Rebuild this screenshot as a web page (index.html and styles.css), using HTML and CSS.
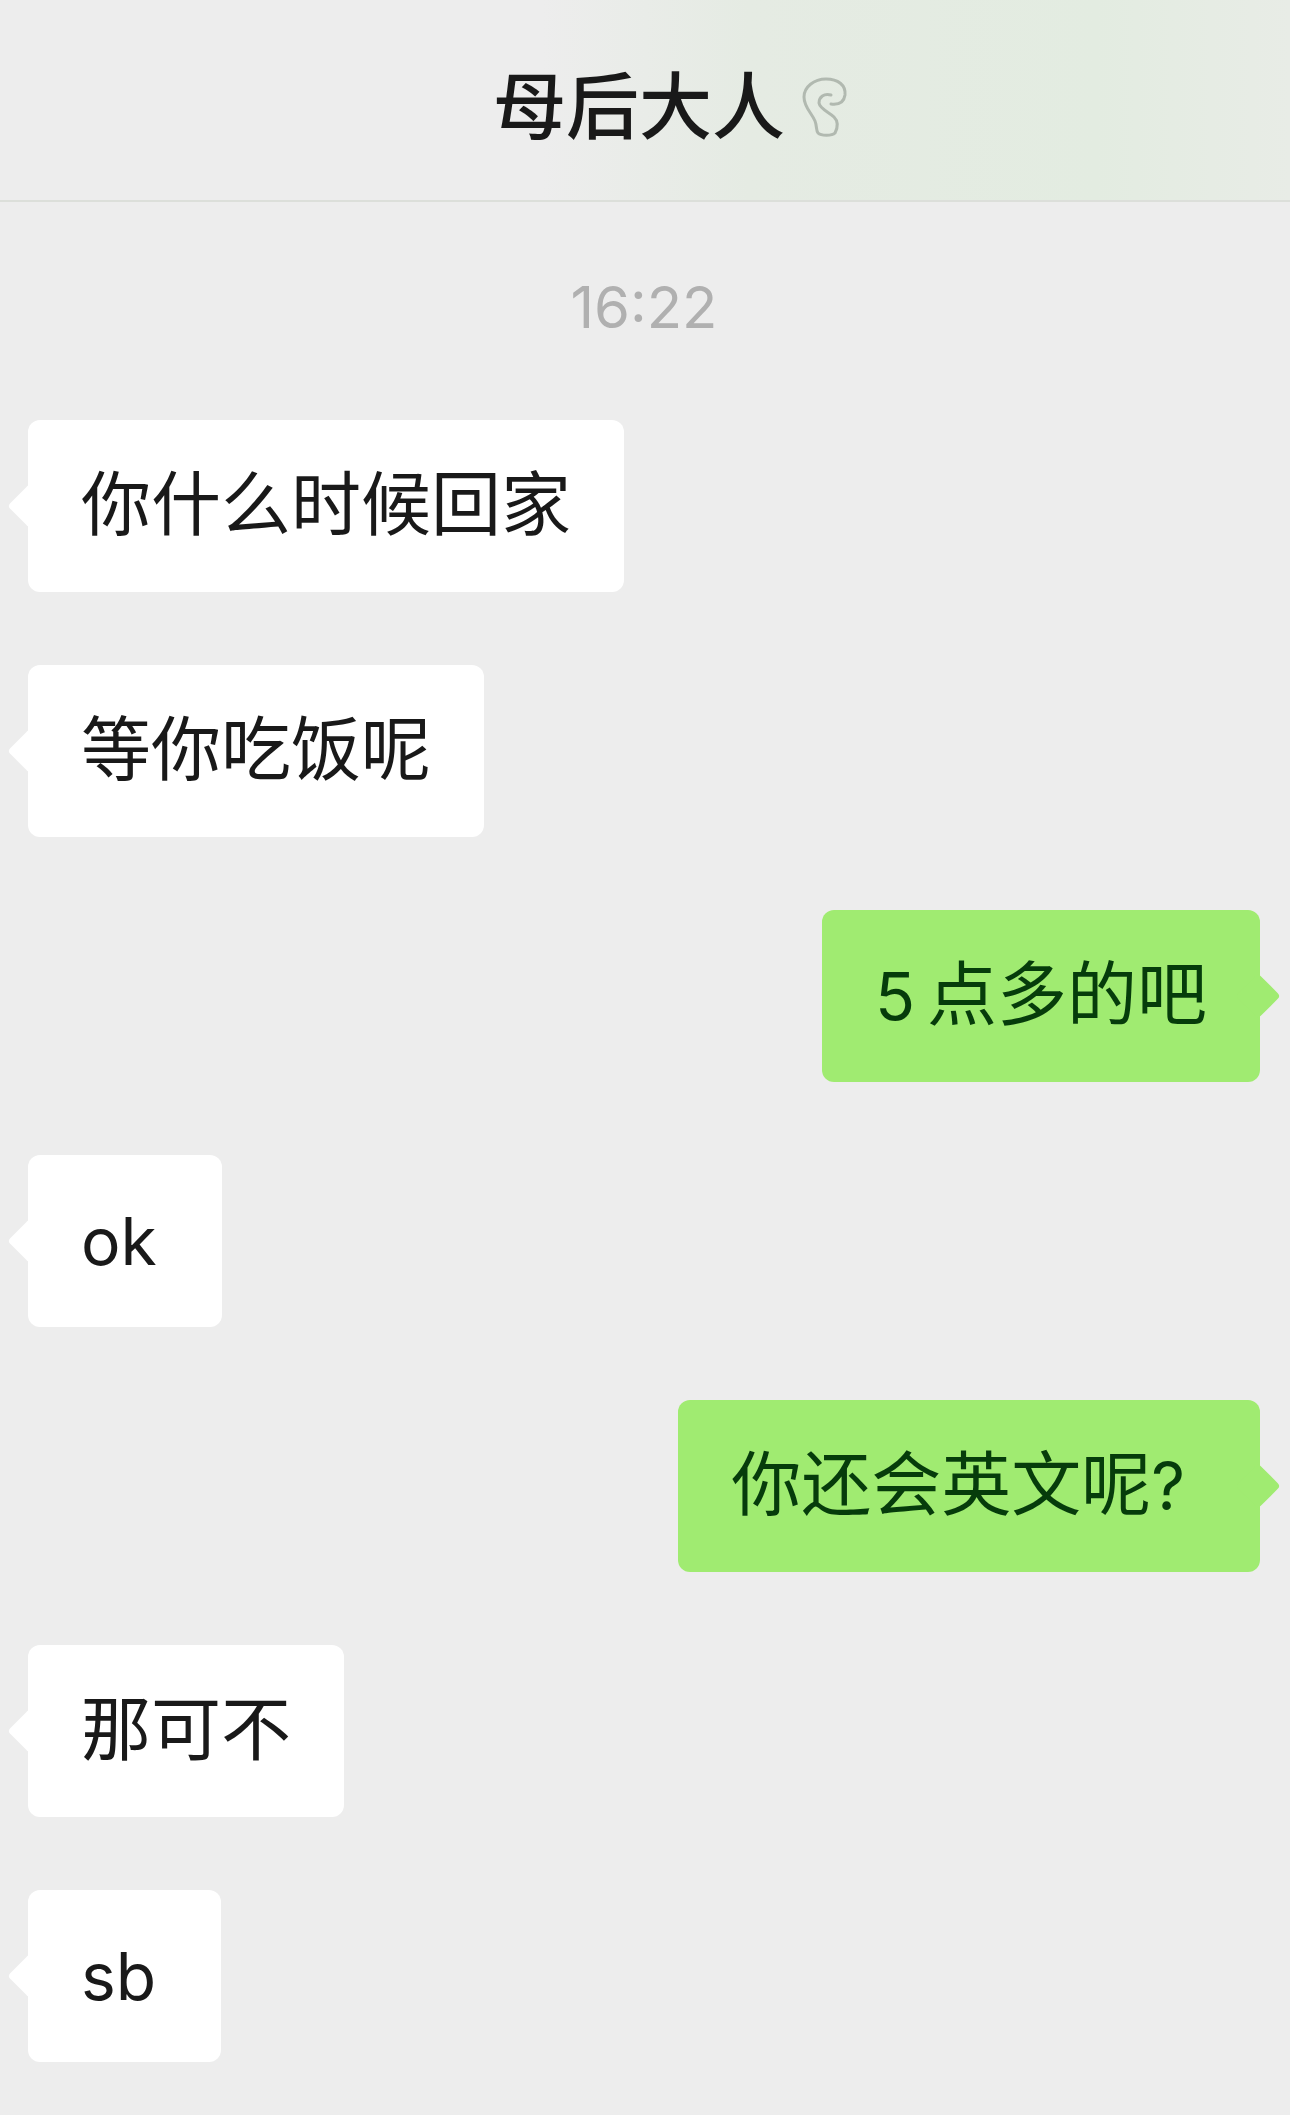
FILE: index.html
```html
<!DOCTYPE html>
<html lang="zh-CN">
<head>
  <meta charset="utf-8">
  <meta name="viewport" content="width=device-width, initial-scale=1">
  <title>母后大人</title>
  <link rel="stylesheet" href="styles.css">
</head>
<body>
  <header class="chat-header">
    <h1 class="chat-title">母后大人</h1>
    <svg class="ear-icon" viewBox="0 0 48 62" aria-hidden="true">
      <path d="M30 28C38 29 43 26 44 19C45 9 37 3 25 3C13 3 3 11 3 21C3 31 10 36 14 45C16 50 15 55 17 57C20 60 31 60 34 57C37 51 37 45 33 41C28 36 19 33 18 27C18 21 23 17 30 19"/>
    </svg>
  </header>
  <main class="chat">
    <time class="chat-time" datetime="16:22">16:22</time>
    <ol class="messages">
      <li class="bubble bubble-in">你什么时候回家</li>
      <li class="bubble bubble-in">等你吃饭呢</li>
      <li class="bubble bubble-out"><span class="latin">5</span>点多的吧</li>
      <li class="bubble bubble-in"><span class="latin">ok</span></li>
      <li class="bubble bubble-out">你还会英文呢<span class="latin latin-mark">?</span></li>
      <li class="bubble bubble-in">那可不</li>
      <li class="bubble bubble-in"><span class="latin">sb</span></li>
    </ol>
  </main>
</body>
</html>
```
FILE: styles.css
```css
* {
  box-sizing: border-box;
}

body {
  margin: 0;
  min-height: 100vh;
  background: #ededed;
  color: #191919;
  font-family: Inter, "Noto Sans CJK SC", sans-serif;
}

.chat-header {
  display: flex;
  align-items: center;
  justify-content: center;
  gap: 16px;
  padding: 52px 0 38px 52px;
  border-bottom: 2px solid #dcdfda;
  background: linear-gradient(90deg, #ededed 42%, #e5ebe3 58%, #e3ece1 85%, #e8ece6);
}

.chat-title {
  margin: 0;
  font-size: 73px;
  font-weight: 500;
  line-height: 110px;
}

.ear-icon {
  width: 48px;
  height: 62px;
  fill: none;
  stroke: #b1b9b0;
  stroke-width: 3;
  stroke-linecap: round;
  stroke-linejoin: round;
}

.chat {
  padding: 70px 30px 52px 28px;
}

.chat-time {
  display: block;
  color: #b0b0b0;
  font-size: 58px;
  line-height: 70px;
  text-align: center;
}

.messages {
  display: flex;
  flex-direction: column;
  gap: 73px;
  margin: 78px 0 0;
  padding: 0;
  list-style: none;
}

.bubble {
  position: relative;
  max-width: 80%;
  padding: 35px 53px 37px;
  border-radius: 12px;
  font-size: 70px;
  line-height: 100px;
}

.bubble::before {
  content: "";
  position: absolute;
  top: 70px;
  width: 32px;
  height: 32px;
  border-radius: 4px;
  background: inherit;
  transform: rotate(45deg);
}

.bubble-in {
  align-self: flex-start;
  background: #fff;
}

.bubble-in::before {
  left: -14px;
}

.bubble-out {
  align-self: flex-end;
  background: #a0eb71;
  color: #063c0b;
}

.bubble-out::before {
  right: -14px;
}

.latin {
  margin-right: 12px;
  font-size: 66px;
  line-height: 1;
}

.latin-mark {
  margin-right: 22px;
}
```
